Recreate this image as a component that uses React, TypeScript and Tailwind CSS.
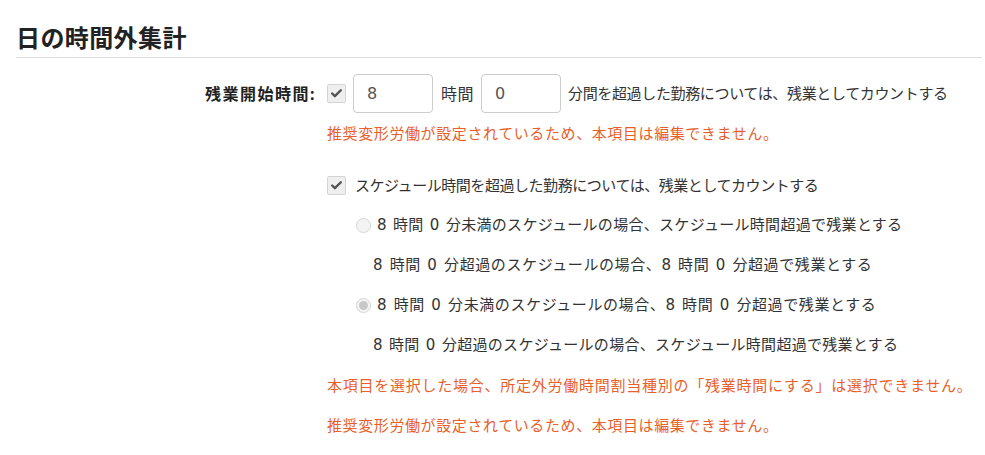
import { Check } from 'lucide-react';

const jp = { fontFamily: '"Noto Sans", "Noto Sans CJK JP", sans-serif' };

function Box() {
  // disabled, pre-checked checkbox
  return (
    <span className="w-[19px] h-[19px] rounded-[2px] border border-[#d4d4d4] bg-[#efefef] flex items-center justify-center shrink-0">
      <Check className="w-[13px] h-[13px] text-[#555]" strokeWidth={4.5} />
    </span>
  );
}

function Radio({ on }: { on?: boolean }) {
  return (
    <span className="w-[15px] h-[15px] rounded-full border border-[#d6d6d6] bg-[#f4f4f4] flex items-center justify-center shrink-0">
      {on && <span className="w-[9px] h-[9px] rounded-full bg-[#c8c8c8]" />}
    </span>
  );
}

// digits in the hour/minute phrases use a wider Latin face
function N({ v }: { v: string }) {
  return <span className="font-['DejaVu_Sans']">{v}</span>;
}

function Hours() {
  return (
    <>
      <N v="8" /> 時間 <N v="0" /> 分
    </>
  );
}

function NumInput({ value }: { value: string }) {
  return (
    <div className="w-[80px] h-[39px] rounded-[4px] border border-[#cccccc] bg-white flex items-center pl-[13px] text-[16px] text-[#555] font-['DejaVu_Sans']">
      {value}
    </div>
  );
}

export default function App() {
  return (
    <div className="w-[985px] h-[455px] bg-white text-[#333] text-[15px] overflow-hidden" style={jp}>
      <div className="ml-[16px] mr-[3px] pt-[22px] pb-[3px] border-b border-[#dedede]">
        <h1 className="text-[24px] tracking-[0.4px] leading-[32px] font-bold text-[#222]">日の時間外集計</h1>
      </div>

      <div className="flex mt-[16px]">
        <div className="w-[316px] h-[39px] flex items-center justify-end font-bold text-[16px] text-[#222] tracking-[1.5px]">
          残業開始時間:
        </div>
        <div className="ml-[11px] flex flex-col">
          <div className="flex items-center h-[39px]">
            <Box />
            <div className="ml-[7px]"><NumInput value="8" /></div>
            <span className="ml-[8px] mr-[7px] text-[16px] tracking-[0.5px]">時間</span>
            <NumInput value="0" />
            <span className="ml-[7px] tracking-[-0.35px]">分間を超過した勤務については、残業としてカウントする</span>
          </div>
          <div className="h-10 flex items-center tracking-[0.6px] text-[#e95f2b]">
            推奨変形労働が設定されているため、本項目は編集できません。
          </div>

          <div className="mt-[12px] h-10 flex items-center gap-[9px]">
            <Box />
            <span className="tracking-[-0.45px]">スケジュール時間を超過した勤務については、残業としてカウントする</span>
          </div>
          <div className="h-10 flex items-center gap-[6px] pl-[29px] [word-spacing:2px]">
            <Radio />
            <span className="tracking-[0.3px]">
              <Hours />未満のスケジュールの場合、スケジュール時間超過で残業とする
            </span>
          </div>
          <div className="h-10 flex items-center pl-[46px] [word-spacing:2px]">
            <span className="tracking-[0.6px]">
              <Hours />超過のスケジュールの場合、<Hours />超過で残業とする
            </span>
          </div>
          <div className="h-10 flex items-center gap-[6px] pl-[29px] [word-spacing:2px]">
            <Radio on />
            <span className="tracking-[0.6px]">
              <Hours />未満のスケジュールの場合、<Hours />超過で残業とする
            </span>
          </div>
          <div className="h-10 flex items-center pl-[46px] [word-spacing:2px]">
            <span className="tracking-[0.3px]">
              <Hours />超過のスケジュールの場合、スケジュール時間超過で残業とする
            </span>
          </div>
          <div className="h-10 flex items-center tracking-[0.75px] text-[#e95f2b]">
            本項目を選択した場合、所定外労働時間割当種別の「残業時間にする」は選択できません。
          </div>
          <div className="h-10 flex items-center tracking-[0.6px] text-[#e95f2b]">
            推奨変形労働が設定されているため、本項目は編集できません。
          </div>
        </div>
      </div>
    </div>
  );
}
